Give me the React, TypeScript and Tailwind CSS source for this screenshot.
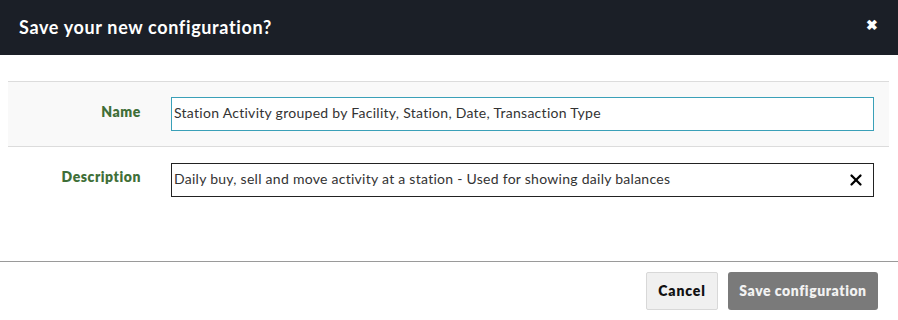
import { X } from "lucide-react";

const font = { fontFamily: '"Lato", "Open Sans", sans-serif' };

export default function App() {
  return (
    <div className="w-[898px] h-[320px] bg-white flex flex-col" style={font}>
      <div className="h-[55px] bg-[#1b1f27] flex items-center justify-between pl-[19px] pr-[20px] shrink-0">
        <h2 className="text-white font-bold text-[18px] tracking-[0.65px]">Save your new configuration?</h2>
        <span className="text-white font-bold text-[14px] leading-none -mt-[6px]">✖</span>
      </div>

      <div className="pt-[26px] pl-[8px] pr-[9px] flex flex-col">
        <div className="bg-[#f9f9f9] border-y border-[#dcdcdc] h-[66px] flex items-center">
          <label className="w-[133px] text-right text-[14px] font-extrabold tracking-[0.6px] text-[#3f6f38] -mt-[6px]">Name</label>
          <div className="ml-[30px] w-[703px] h-[34px] border border-[#3aa0b8] bg-white flex items-center px-[2px] pb-[3px] text-[14px] tracking-[0.28px] text-[#333]">
            Station Activity grouped by Facility, Station, Date, Transaction Type
          </div>
        </div>
        <div className="h-[65px] flex items-center">
          <label className="w-[133px] text-right text-[14px] font-extrabold tracking-[0.55px] text-[#3f6f38] -mt-[6px]">Description</label>
          <div className="ml-[30px] w-[703px] h-[34px] border border-[#222] bg-white flex items-center justify-between pl-[2px] pr-[8px] text-[14px] tracking-[0.27px] text-[#333]">
            <span className="pb-[3px]">Daily buy, sell and move activity at a station - Used for showing daily balances</span>
            <X className="w-[18px] h-[18px] text-black" strokeWidth={3} />
          </div>
        </div>
      </div>

      <div className="mt-auto border-t border-[#9a9a9a] h-[59px] flex items-center justify-end gap-[10px] pr-[20px] pb-[1px]">
        <button className="h-[38px] w-[72px] bg-[#f0f0f0] border border-[#d8d8d8] rounded-[2px] text-[14px] font-extrabold tracking-[0.9px] text-[#111]">Cancel</button>
        <button className="h-[38px] w-[150px] bg-[#7a7a7a] rounded-[3px] text-[14px] font-extrabold tracking-[0.55px] text-[#f2f2f2]">Save configuration</button>
      </div>
    </div>
  );
}
